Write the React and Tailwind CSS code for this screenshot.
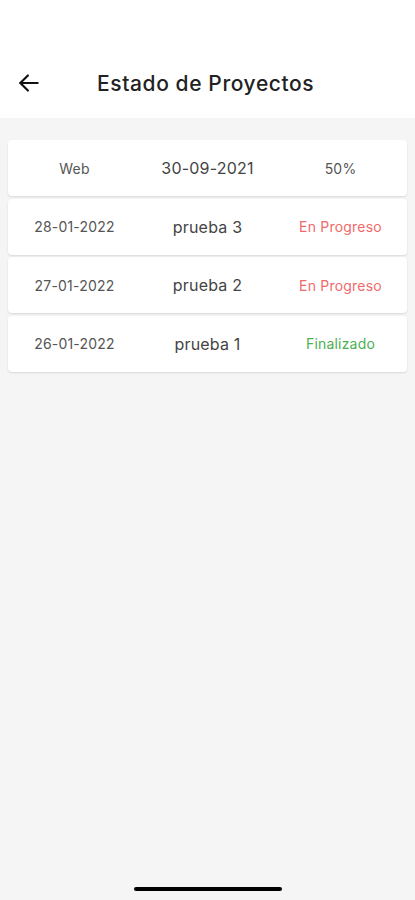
import React from 'react'

const rows = [
    { date: '28-01-2022', name: 'prueba 3', status: 'En Progreso', color: 'text-[#ef6b6b]' },
    { date: '27-01-2022', name: 'prueba 2', status: 'En Progreso', color: 'text-[#ef6b6b]' },
    { date: '26-01-2022', name: 'prueba 1', status: 'Finalizado', color: 'text-[#4caf50]' },
]

function Row({ left, center, right, rightClass = 'text-[#555]' }) {
    return (
        <div className="flex h-[56px] items-center rounded-[4px] bg-white shadow-[0_1px_2px_rgba(0,0,0,0.12)]">
            <div className="flex-1 text-center text-[14px] tracking-[0.2px] text-[#555]">{left}</div>
            <div className="flex-1 text-center text-[16px] tracking-[0.2px] text-[#444]">{center}</div>
            <div className={`flex-1 text-center text-[14px] tracking-[0.2px] ${rightClass}`}>{right}</div>
        </div>
    )
}

export default function App() {
    return (
        <div className="flex h-[900px] flex-col bg-[#f5f5f5] font-['Inter',sans-serif]">
            <div className="flex h-[118px] items-end bg-white pb-[19px]">
                <div className="flex w-full items-center">
                    <button className="ml-[15px] flex h-[28px] w-[28px] items-center justify-center">
                        <svg width="26" height="26" viewBox="0 0 24 24" fill="none" stroke="#111" strokeWidth="2" strokeLinecap="round" strokeLinejoin="round">
                            <path d="M20 12H4" />
                            <path d="M11 5l-7 7 7 7" />
                        </svg>
                    </button>
                    <h1 className="ml-[54px] text-[21px] font-medium tracking-[0.6px] text-[#222]">
                        Estado de Proyectos
                    </h1>
                </div>
            </div>
            <div className="mx-[8px] mt-[22px] flex flex-col gap-[2.6px]">
                <Row left="Web" center="30-09-2021" right="50%" />
                {rows.map((r) => (
                    <Row key={r.name} left={r.date} center={r.name} right={r.status} rightClass={r.color} />
                ))}
            </div>
            <div className="mt-auto flex justify-center pb-[9px]">
                <div className="h-[4px] w-[148px] rounded-full bg-black" />
            </div>
        </div>
    )
}
